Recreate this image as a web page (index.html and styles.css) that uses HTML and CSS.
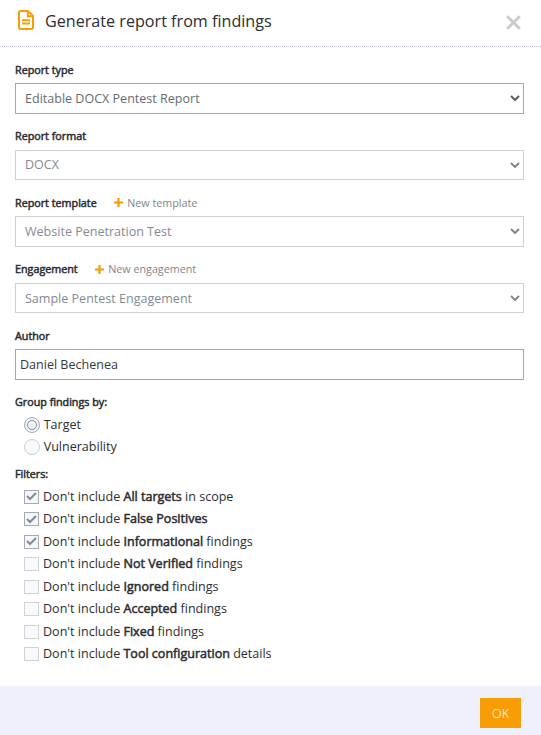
FILE: index.html
```html
<!DOCTYPE html>
<html lang="en">
<head>
<meta charset="utf-8">
<title>Generate report from findings</title>
<link rel="stylesheet" href="styles.css">
</head>
<body>
<div class="dialog">
  <header class="header">
    <svg class="doc" width="16" height="20" viewBox="0 0 16 20" fill="none" stroke="#f99d07" stroke-width="2"><path d="M2.500 1H10l5 5v11.500a1.500 1.500 0 0 1-1.500 1.500h-11A1.500 1.500 0 0 1 1 17.500V2.500A1.500 1.500 0 0 1 2.500 1Z"/><path d="M9.800 1v5.300H15M4 10.200h8M4 13.500h8"/></svg>
    <h1 class="title">Generate report from findings</h1>
    <svg class="close" width="15" height="15" viewBox="0 0 15 15" stroke="#c9cbcd" stroke-width="3"><path d="M1.200 1.200l12.600 12.600M13.800 1.200l-12.600 12.600"/></svg>
  </header>
  <main class="content">
    <div class="field"><div class="label"><span class="strong">Report type</span></div>
      <div class="box active"><span>Editable DOCX Pentest Report</span><svg class="arrow" width="10" height="6" viewBox="0 0 10 6"><path d="M1 1l4 4 4-4"/></svg></div></div>
    <div class="field"><div class="label"><span class="strong">Report format</span></div>
      <div class="box disabled"><span>DOCX</span><svg class="arrow" width="10" height="6" viewBox="0 0 10 6"><path d="M1 1l4 4 4-4"/></svg></div></div>
    <div class="field"><div class="label"><span class="strong">Report template</span><svg class="plus" width="9" height="9" viewBox="0 0 9 9"><path d="M4.500 0v9M0 4.500h9"/></svg><span class="new">New template</span></div>
      <div class="box disabled"><span>Website Penetration Test</span><svg class="arrow" width="10" height="6" viewBox="0 0 10 6"><path d="M1 1l4 4 4-4"/></svg></div></div>
    <div class="field"><div class="label"><span class="strong">Engagement</span><svg class="plus" width="9" height="9" viewBox="0 0 9 9"><path d="M4.500 0v9M0 4.500h9"/></svg><span class="new">New engagement</span></div>
      <div class="box disabled low"><span>Sample Pentest Engagement</span><svg class="arrow" width="10" height="6" viewBox="0 0 10 6"><path d="M1 1l4 4 4-4"/></svg></div></div>
    <div class="field"><div class="label"><span class="strong">Author</span></div>
      <div class="box input"><span>Daniel Bechenea</span></div></div>

    <div class="label group"><span class="strong">Group findings by:</span></div>
    <div class="option"><i class="radio on"></i><span>Target</span></div>
    <div class="option"><i class="radio"></i><span>Vulnerability</span></div>

    <div class="label filters"><span class="strong">Filters:</span></div>
    <div class="option"><i class="check on"><svg width="11" height="9" viewBox="0 0 11 9"><path d="M1 4l3 3 6-6"/></svg></i><span>Don't include <b>All targets</b> in scope</span></div>
    <div class="option"><i class="check on"><svg width="11" height="9" viewBox="0 0 11 9"><path d="M1 4l3 3 6-6"/></svg></i><span>Don't include <b>False Positives</b></span></div>
    <div class="option"><i class="check on"><svg width="11" height="9" viewBox="0 0 11 9"><path d="M1 4l3 3 6-6"/></svg></i><span>Don't include <b>Informational</b> findings</span></div>
    <div class="option"><i class="check"></i><span>Don't include <b>Not Verified</b> findings</span></div>
    <div class="option"><i class="check"></i><span>Don't include <b>Ignored</b> findings</span></div>
    <div class="option"><i class="check"></i><span>Don't include <b>Accepted</b> findings</span></div>
    <div class="option"><i class="check"></i><span>Don't include <b>Fixed</b> findings</span></div>
    <div class="option"><i class="check"></i><span>Don't include <b>Tool configuration</b> details</span></div>
  </main>
  <footer class="footer"><button class="ok">OK</button></footer>
</div>
</body>
</html>
```
FILE: styles.css
```css
* { box-sizing: border-box; }
body { margin: 0; background: #fff; color: #2b2d31; font: 12.54px "Open Sans", "Noto Sans", sans-serif; }
.dialog { height: 735px; display: flex; flex-direction: column; overflow: hidden; }
.header { height: 47px; flex: none; display: flex; align-items: center; padding: 0 20px 5px 18px; border-bottom: 1px dotted #c3c5d4; }
.doc { margin-top: -1px; }
.title { margin: 0 auto 0 11px; font-size: 16.15px; font-weight: 400; line-height: 22px; white-space: nowrap; }
.close { margin-top: 3px; }
.content { flex: 1; padding: 14px 17px 0 15px; }
.field { height: 66.5px; }
.label { height: 22px; display: flex; align-items: flex-start; line-height: 17.8px; font-size: 10.75px; white-space: nowrap; }
.label span { margin-top: 0.8px; }
.strong, b { font-weight: 400; -webkit-text-stroke: 0.5px currentColor; }
.plus { margin: 4px 4.5px 0 17px; stroke: #f99d07; stroke-width: 2.2; }
.new { color: #80858d; }
.box { height: 30.5px; display: flex; align-items: center; justify-content: space-between; padding: 0 3px 0 9px; border: 1px solid #cfd0d2; }
.box.active { border-color: #f0a30f; color: #666b72; }
.box.disabled { color: #858a92; }
.box.low span { padding-top: 1px; }
.box.input { border-color: #a5a6a8; padding-left: 4px; color: #36383c; }
.arrow { fill: none; stroke: #81868e; stroke-width: 2; }
.active .arrow { stroke: #575c64; }
.group { height: 20px; }
.filters { height: 19.9px; margin-top: 7px; }
.option { height: 22.5px; display: flex; align-items: center; padding-left: 9px; line-height: 20px; white-space: nowrap; }
.radio { width: 16px; height: 16px; margin-right: 3.7px; border: 1px solid #cbced4; border-radius: 50%; background: #f7f9fd; display: flex; align-items: center; justify-content: center; }
.radio.on { border-color: #a2a8b0; background: #f2f5fa; }
.radio.on::after { content: ""; width: 8px; height: 8px; border: 1px solid #858a92; border-radius: 50%; }
.check { width: 15px; height: 14px; margin-right: 4px; border: 1px solid #cfd2d7; background: #f8f9fd; display: flex; align-items: center; justify-content: center; }
.check.on { border-color: #a5aab1; background: #f3f6fb; }
.check svg { fill: none; stroke: #858a90; stroke-width: 2; }
.footer { height: 49px; flex: none; background: #eef1fa; padding: 12px 20px 0; display: flex; justify-content: flex-end; align-items: flex-start; }
.ok { width: 41px; height: 30px; padding: 0; border: 0; background: #f99d07; color: #fff; font: 300 12.5px "Open Sans", sans-serif; }
```
